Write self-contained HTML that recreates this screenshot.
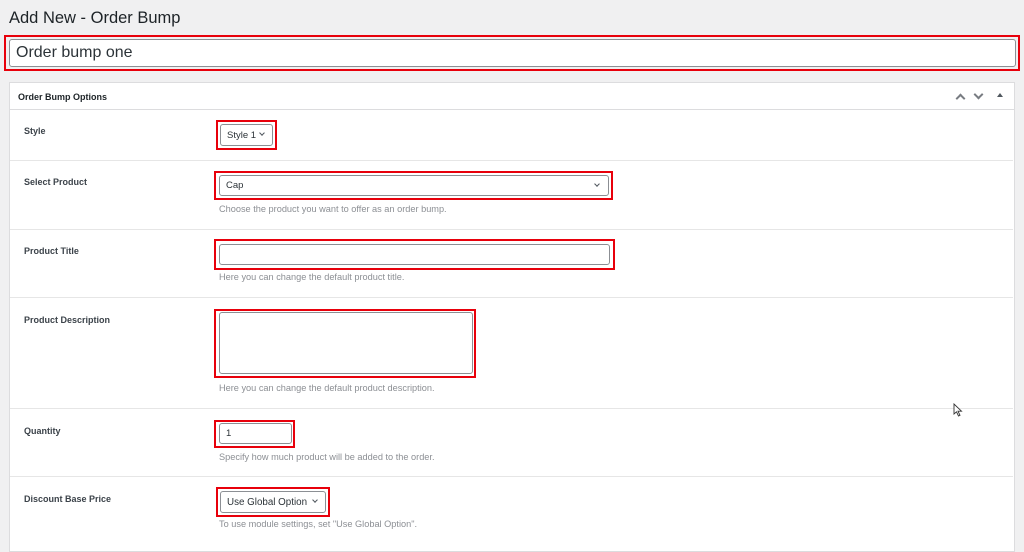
<!DOCTYPE html>
<html><head><style>
*{box-sizing:border-box;margin:0;padding:0}
body{width:1024px;height:544px;background:#f0f0f1;font-family:"Liberation Sans",sans-serif;position:relative;overflow:hidden;color:#3c434a}
.a{position:absolute}
.red{position:absolute;border:2px solid #e8000b}
.in{position:absolute;background:#fff;border:1px solid #8c8f94;border-radius:3px;font-size:10px;color:#2c3338;padding-left:6px;display:flex;align-items:center}
.lbl{position:absolute;left:24px;font-size:9px;font-weight:bold;color:#3c434a}
.help{position:absolute;left:219px;font-size:9.2px;color:#8c8f94}
.sep{position:absolute;left:10px;width:1003px;height:1px;background:#e6e6e6}
.chev{position:absolute;width:5px;height:5px;border-right:1.2px solid #50575e;border-bottom:1.2px solid #50575e;transform:rotate(45deg)}
.hc{position:absolute;width:7px;height:7px;border-right:2px solid #787c82;border-bottom:2px solid #787c82;transform:rotate(45deg)}
</style></head><body>
<div class="a" style="left:9px;top:9px;font-size:16.5px;color:#1d2327">Add New - Order Bump</div>
<div class="red" style="left:4px;top:35px;width:1016px;height:36px"></div>
<div class="in" style="left:9px;top:39px;width:1007px;height:28px;font-size:16px;padding-left:6px">Order bump one</div>

<div class="a" style="left:9px;top:82px;width:1006px;height:470px;background:#fff;border:1px solid #dcdcde"></div>
<div class="a" style="left:10px;top:109px;width:1004px;height:1px;background:#dcdcde"></div>
<div class="a" style="left:18px;top:92px;font-size:9px;font-weight:bold;color:#1d2327">Order Bump Options</div>
<div class="hc" style="left:957px;top:95px;transform:rotate(225deg)"></div>
<div class="hc" style="left:975px;top:91px"></div>
<div class="a" style="left:997px;top:93px;width:0;height:0;border-left:3px solid transparent;border-right:3px solid transparent;border-bottom:4px solid #50575e"></div>

<div class="lbl" style="top:126px">Style</div>
<div class="red" style="left:216px;top:120px;width:61px;height:30px"></div>
<div class="in" style="left:220px;top:124px;width:53px;height:22px;font-size:9.5px">Style 1</div>
<div class="chev" style="left:260px;top:131px;width:4px;height:4px"></div>
<div class="sep" style="top:160px"></div>

<div class="lbl" style="top:177px">Select Product</div>
<div class="red" style="left:214px;top:171px;width:399px;height:29px"></div>
<div class="in" style="left:219px;top:175px;width:390px;height:21px;font-size:9.5px">Cap</div>
<div class="chev" style="left:595px;top:182px;width:4px;height:4px"></div>
<div class="help" style="top:204px">Choose the product you want to offer as an order bump.</div>
<div class="sep" style="top:229px"></div>

<div class="lbl" style="top:246px">Product Title</div>
<div class="red" style="left:214px;top:239px;width:401px;height:31px"></div>
<div class="in" style="left:219px;top:244px;width:391px;height:21px"></div>
<div class="help" style="top:272px">Here you can change the default product title.</div>
<div class="sep" style="top:297px"></div>

<div class="lbl" style="top:315px">Product Description</div>
<div class="red" style="left:214px;top:309px;width:262px;height:69px"></div>
<div class="in" style="left:219px;top:312px;width:254px;height:62px"></div>
<div class="help" style="top:383px">Here you can change the default product description.</div>
<div class="sep" style="top:408px"></div>

<div class="lbl" style="top:426px">Quantity</div>
<div class="red" style="left:214px;top:420px;width:81px;height:28px"></div>
<div class="in" style="left:219px;top:423px;width:73px;height:21px;font-size:9.5px">1</div>
<div class="help" style="top:452px">Specify how much product will be added to the order.</div>
<div class="sep" style="top:476px"></div>

<div class="lbl" style="top:494px">Discount Base Price</div>
<div class="red" style="left:216px;top:487px;width:114px;height:30px"></div>
<div class="in" style="left:220px;top:491px;width:106px;height:22px;font-size:9.8px">Use Global Option</div>
<div class="chev" style="left:313px;top:498px;width:4px;height:4px"></div>
<div class="help" style="top:519px">To use module settings, set "Use Global Option".</div>

<svg class="a" style="left:953px;top:403px" width="10" height="14" viewBox="0 0 10 14"><path d="M1 1 L1 11 L3.5 8.8 L5.5 13 L7 12.3 L5 8.2 L8.5 8.2 Z" fill="#fff" stroke="#333" stroke-width="0.9"/></svg>
</body></html>
